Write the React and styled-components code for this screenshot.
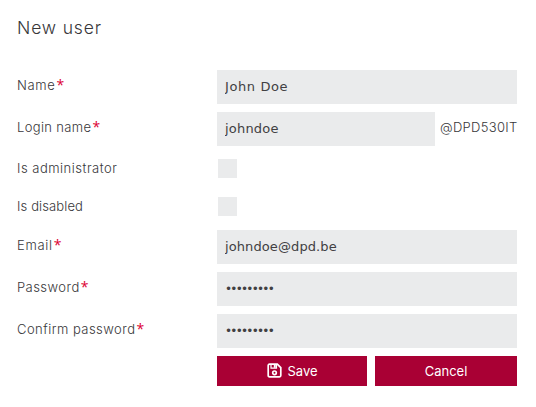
import React from "react";
import styled, { createGlobalStyle } from "styled-components";

const GlobalStyle = createGlobalStyle`
  * {
    box-sizing: border-box;
  }
  body {
    margin: 0;
    background: #ffffff;
    color: #38373a;
    font-family: Inter, "Open Sans", "Liberation Sans", sans-serif;
    font-size: 13px;
  }
`;

const Page = styled.main`
  width: 517px;
  padding: 16px 0 0 17px;
`;

const Title = styled.h1`
  margin: 0 0 30px;
  font-size: 17.5px;
  font-weight: 300;
  line-height: 24px;
  letter-spacing: 0.85px;
`;

const Form = styled.form`
  display: flex;
  flex-direction: column;
  gap: 8px;
`;

const Row = styled.div`
  display: grid;
  grid-template-columns: 200px 300px;
  height: ${props => (props.$compact ? 30 : 34)}px;
`;

const Label = styled.label`
  padding-top: ${props => (props.$compact ? 4 : 5)}px;
  font-size: 13px;
  font-weight: 300;
  line-height: 20px;
  letter-spacing: ${props => props.$spacing}px;
  white-space: nowrap;
`;

const Required = styled.span`
  margin-left: 1px;
  color: #dc0032;
  font-family: "Open Sans", sans-serif;
  font-size: 14px;
  font-weight: 400;
  line-height: 1;
  letter-spacing: 0;
`;

const FieldWrapper = styled.div`
  display: flex;
  gap: 5px;
`;

const Input = styled.input`
  flex: 1;
  min-width: 0;
  height: 34px;
  margin: 0;
  padding: 0 8px 1px;
  border: 0;
  border-radius: 0;
  outline: none;
  background: #eaebec;
  color: #414042;
  font-family: "DejaVu Sans", sans-serif;
  font-size: 13px;
  letter-spacing: ${props => props.$spacing || 0}px;
`;

const PasswordInput = styled(Input)`
  font-size: 12px;
  letter-spacing: -1.75px;
`;

const Suffix = styled.span`
  flex: none;
  width: 77px;
  padding-top: 5px;
  font-weight: 300;
  line-height: 20px;
  letter-spacing: 0.3px;
  white-space: nowrap;
`;

const Checkbox = styled.input`
  appearance: none;
  width: 19px;
  height: 19px;
  margin: 5px 0 0 1px;
  background: #eaebec;
`;

const Actions = styled.div`
  display: grid;
  grid-template-columns: 150px 142px;
  gap: 8px;
  margin-left: 200px;
`;

const Button = styled.button`
  display: flex;
  align-items: center;
  justify-content: center;
  gap: 5px;
  height: 30px;
  padding: 0 0 1px;
  border: 0;
  background: #a90034;
  color: #ffffff;
  font-family: inherit;
  font-size: 13px;
  letter-spacing: 0;
`;

const SaveButton = styled(Button)`
  padding-left: 1px;
`;

const SaveIcon = () => (
  <svg width="15" height="15" viewBox="0 0 15 15" fill="none" stroke="#ffffff">
    <path
      d="M2.5 1.2H10.3L13.8 4.7V12.5Q13.8 13.8 12.5 13.8H2.5Q1.2 13.8 1.2 12.5V2.5Q1.2 1.2 2.5 1.2Z"
      strokeWidth="1.7"
    />
    <path d="M4 1.5V5.2H9.5V1.5" strokeWidth="1.2" />
    <path d="M7.8 2V4.8" strokeWidth="2" />
    <circle cx="7.5" cy="9.8" r="1.8" strokeWidth="1.7" />
  </svg>
);

const FormRow = ({ id, label, spacing, required, compact, children }) => (
  <Row $compact={compact}>
    <Label htmlFor={id} $spacing={spacing} $compact={compact}>
      {label}
      {required && <Required>*</Required>}
    </Label>
    <FieldWrapper>{children}</FieldWrapper>
  </Row>
);

const App = () => (
  <>
    <GlobalStyle />
    <Page>
      <Title>New user</Title>
      <Form onSubmit={e => e.preventDefault()}>
        <FormRow id="name" label="Name" spacing={0.65} required>
          <Input id="name" defaultValue="John Doe" $spacing={0.6} />
        </FormRow>
        <FormRow id="login" label="Login name" spacing={0.35} required>
          <Input id="login" defaultValue="johndoe" $spacing={0.2} />
          <Suffix>@DPD530IT</Suffix>
        </FormRow>
        <FormRow id="admin" label="Is administrator" spacing={0.5} compact>
          <Checkbox id="admin" type="checkbox" />
        </FormRow>
        <FormRow id="disabled" label="Is disabled" spacing={0.12} compact>
          <Checkbox id="disabled" type="checkbox" />
        </FormRow>
        <FormRow id="email" label="Email" spacing={0.7} required>
          <Input id="email" defaultValue="johndoe@dpd.be" spellCheck="false" $spacing={0.1} />
        </FormRow>
        <FormRow id="password" label="Password" spacing={0.45} required>
          <PasswordInput id="password" type="password" defaultValue="password1" />
        </FormRow>
        <FormRow id="confirm" label="Confirm password" spacing={0.47} required>
          <PasswordInput id="confirm" type="password" defaultValue="password1" />
        </FormRow>
        <Actions>
          <SaveButton type="submit">
            <SaveIcon />
            Save
          </SaveButton>
          <Button type="button">Cancel</Button>
        </Actions>
      </Form>
    </Page>
  </>
);

export default App;
